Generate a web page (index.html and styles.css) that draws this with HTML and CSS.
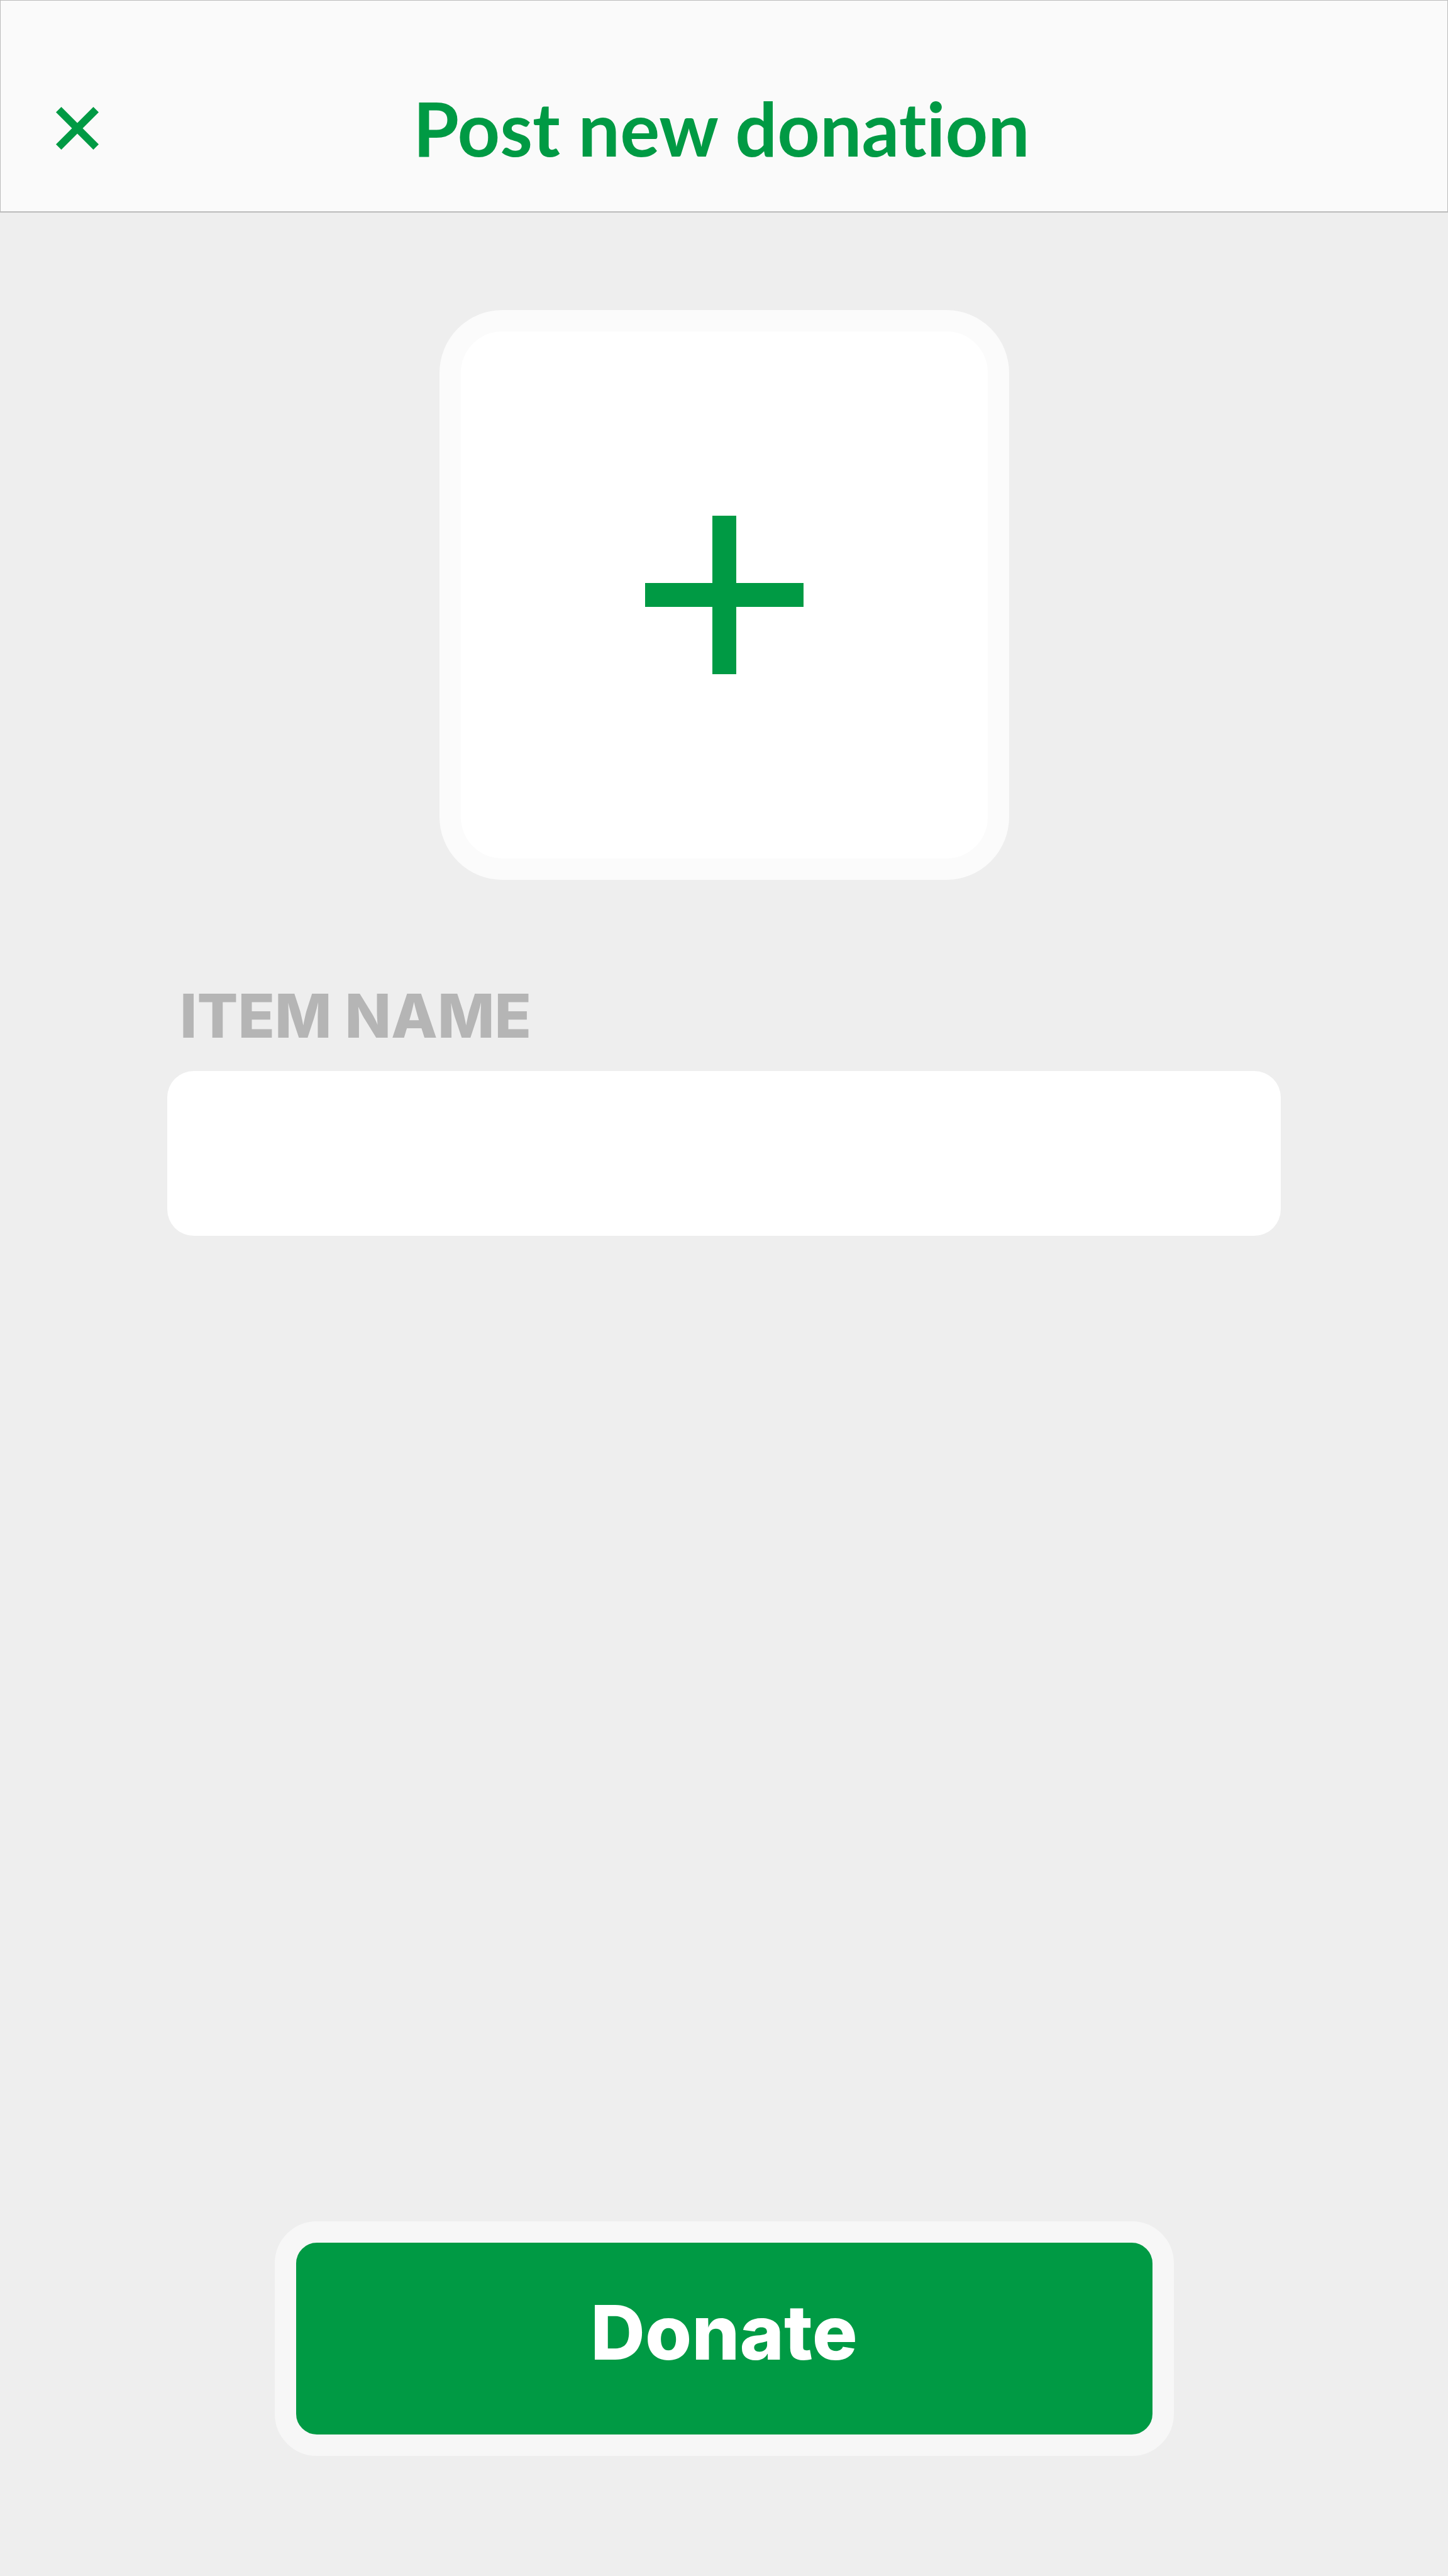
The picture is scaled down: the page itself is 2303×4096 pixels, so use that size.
FILE: index.html
```html
<!DOCTYPE html>
<html lang="en">
<head>
<meta charset="utf-8">
<title>Post new donation</title>
<meta name="viewport" content="width=device-width, initial-scale=1">
<link rel="stylesheet" href="styles.css">
</head>
<body>
<header class="bar">
  <button class="close" type="button" aria-label="Close">
    <svg class="close-icon" viewBox="0 0 68 68" aria-hidden="true"><path d="M8.500 0 34 25.500 59.500 0 68 8.500 42.500 34 68 59.500 59.500 68 34 42.500 8.500 68 0 59.500 25.500 34 0 8.500z"/></svg>
  </button>
  <h1 class="title">Post new donation</h1>
</header>
<form class="form">
  <button class="photo" type="button" aria-label="Add photo">
    <svg class="plus-icon" viewBox="0 0 252 252" aria-hidden="true"><path d="M107 0h38v107h107v38H145v107h-38V145H0v-38h107z"/></svg>
  </button>
  <div class="field">
    <label class="label" for="item">ITEM NAME</label>
    <input class="input" id="item" name="item" type="text">
  </div>
  <button class="donate" type="submit">Donate</button>
</form>
</body>
</html>
```
FILE: styles.css
```css
* {
  box-sizing: border-box;
}

body {
  margin: 0;
  min-height: 100vh;
  display: flex;
  flex-direction: column;
  background: #eee;
  color: #009a44;
  font-family: Inter, "Open Sans", sans-serif;
}

button {
  padding: 0;
  color: inherit;
  cursor: pointer;
}

.bar {
  display: grid;
  grid-template-columns: 160px 1fr 168px;
  align-items: center;
  padding: 70px 42px 0;
  height: 338px;
  background: #fafafa;
  border: 1px solid #bbb;
  border-bottom-width: 2px;
}

.close {
  display: flex;
  justify-content: center;
  border: 0;
  background: none;
}

.close-icon {
  width: 68px;
  height: 68px;
  fill: currentColor;
}

.title {
  margin: 0;
  font-family: Lato, "Open Sans", sans-serif;
  font-size: 118px;
  line-height: 140px;
  font-weight: 700;
  font-variant-ligatures: none;
  text-align: center;
}

.form {
  flex: 1;
  display: flex;
  flex-direction: column;
  align-items: center;
  padding: 155px 266px 191px;
}

.photo {
  display: grid;
  place-items: center;
  width: 906px;
  height: 906px;
  border: 34px solid #fbfbfb;
  border-radius: 100px;
  background: #fff;
}

.plus-icon {
  width: 252px;
  height: 252px;
  fill: currentColor;
}

.field {
  display: flex;
  flex-direction: column;
  align-self: stretch;
  gap: 26px;
  margin-top: 154px;
}

.label {
  padding-left: 20px;
  color: #b5b5b5;
  font-size: 96px;
  line-height: 124px;
  font-weight: 800;
}

.input {
  width: 100%;
  height: 262px;
  padding: 0 48px;
  border: 0;
  border-radius: 42px;
  background: #fff;
  color: #333;
  font: inherit;
  font-size: 96px;
}

.donate {
  width: 1430px;
  max-width: 100%;
  height: 373px;
  margin-top: auto;
  padding-bottom: 20px;
  border: 34px solid #f7f7f7;
  border-radius: 67px;
  background: #009a44;
  color: #fff;
  font: inherit;
  font-size: 120px;
  line-height: 150px;
  font-weight: 800;
}
```
